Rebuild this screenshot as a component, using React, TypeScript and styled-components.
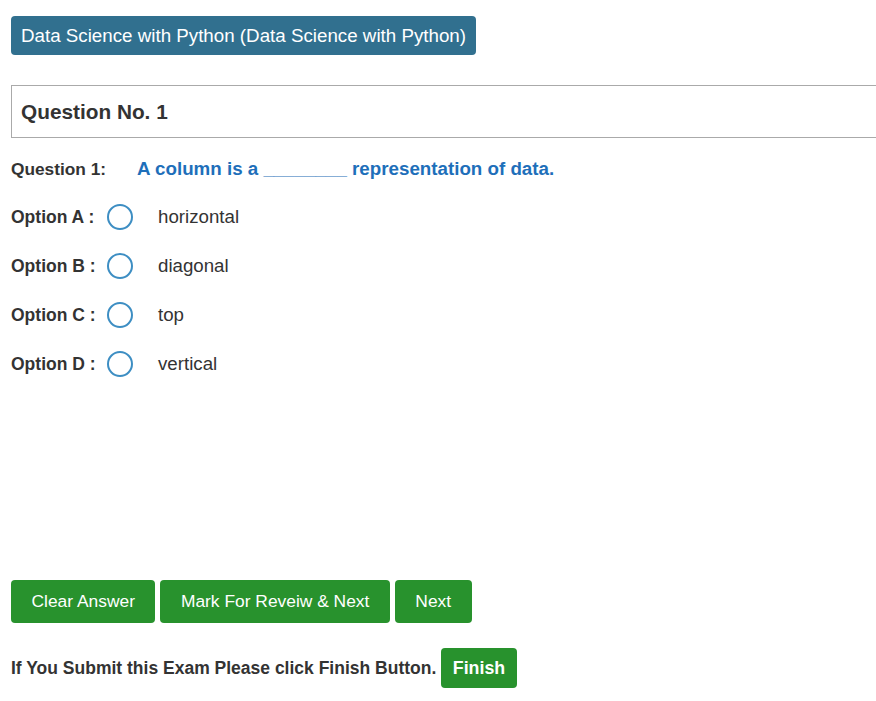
import React from "react";
import styled, { createGlobalStyle } from "styled-components";

const Global = createGlobalStyle`
  html, body { margin: 0; padding: 0; background: #fff; overflow-x: hidden; }
  body { font-family: "Liberation Sans", Arial, sans-serif; color: #333; }
`;

const Page = styled.div`
  padding: 16px 0 0 11px;
`;

const Badge = styled.div`
  display: inline-flex;
  align-items: center;
  height: 39px;
  padding: 0 10px;
  background: #31708f;
  color: #fff;
  font-size: 18.75px;
  border-radius: 4px;
`;

const Panel = styled.div`
  margin-top: 30px;
  margin-right: -20px;
  height: 51px;
  border: 1px solid #aaa;
  display: flex;
  align-items: center;
  padding-left: 9px;
  font-size: 20.8px;
  font-weight: bold;
  color: #333;
`;

const QuestionRow = styled.div`
  margin-top: 19px;
  height: 24px;
  display: flex;
  align-items: center;
`;

const QLabel = styled.span`
  width: 126px;
  font-size: 17.3px;
  font-weight: bold;
  color: #333;
`;

const QText = styled.span`
  font-size: 18.75px;
  font-weight: bold;
  color: #1e6fba;
`;

const Options = styled.div`
  margin-top: 23px;
  display: flex;
  flex-direction: column;
  gap: 23px;
`;

const OptionRow = styled.label`
  height: 26px;
  display: flex;
  align-items: center;
`;

const OptLabel = styled.span`
  width: 96px;
  font-size: 17.5px;
  font-weight: bold;
  color: #333;
`;

const Radio = styled.span`
  width: 26px;
  height: 26px;
  box-sizing: border-box;
  border: 2px solid #3d8ec3;
  border-radius: 50%;
  margin-right: 25px;
`;

const OptText = styled.span`
  font-size: 18.7px;
  color: #333;
`;

const Buttons = styled.div`
  margin-top: 203px;
  display: flex;
  gap: 5px;
`;

const GreenButton = styled.button<{ $bold?: boolean; $h?: number; $px?: number }>`
  height: ${(p) => p.$h ?? 43}px;
  padding: 0 ${(p) => p.$px ?? 20.5}px;
  background: #28922d;
  color: #fff;
  border: none;
  border-radius: 4px;
  font-family: "Liberation Sans", Arial, sans-serif;
  font-size: ${(p) => (p.$bold ? 17.8 : 17.4)}px;
  font-weight: ${(p) => (p.$bold ? "bold" : "normal")};
  cursor: pointer;
`;

const FinishRow = styled.div`
  margin-top: 25px;
  display: flex;
  align-items: center;
  gap: 5px;
`;

const FinishText = styled.span`
  font-size: 17.5px;
  font-weight: bold;
  color: #333;
`;

const options = [
  ["A", "horizontal"],
  ["B", "diagonal"],
  ["C", "top"],
  ["D", "vertical"],
];

export default function App() {
  return (
    <Page>
      <Global />
      <Badge>Data Science with Python (Data Science with Python)</Badge>
      <Panel>Question No. 1</Panel>
      <QuestionRow>
        <QLabel>Question 1:</QLabel>
        <QText>A column is a ________ representation of data.</QText>
      </QuestionRow>
      <Options>
        {options.map(([k, v]) => (
          <OptionRow key={k}>
            <OptLabel>Option {k} :</OptLabel>
            <Radio />
            <OptText>{v}</OptText>
          </OptionRow>
        ))}
      </Options>
      <Buttons>
        <GreenButton>Clear Answer</GreenButton>
        <GreenButton>Mark For Reveiw &amp; Next</GreenButton>
        <GreenButton>Next</GreenButton>
      </Buttons>
      <FinishRow>
        <FinishText>If You Submit this Exam Please click Finish Button.</FinishText>
        <GreenButton $bold $h={40} $px={11.5}>Finish</GreenButton>
      </FinishRow>
    </Page>
  );
}
